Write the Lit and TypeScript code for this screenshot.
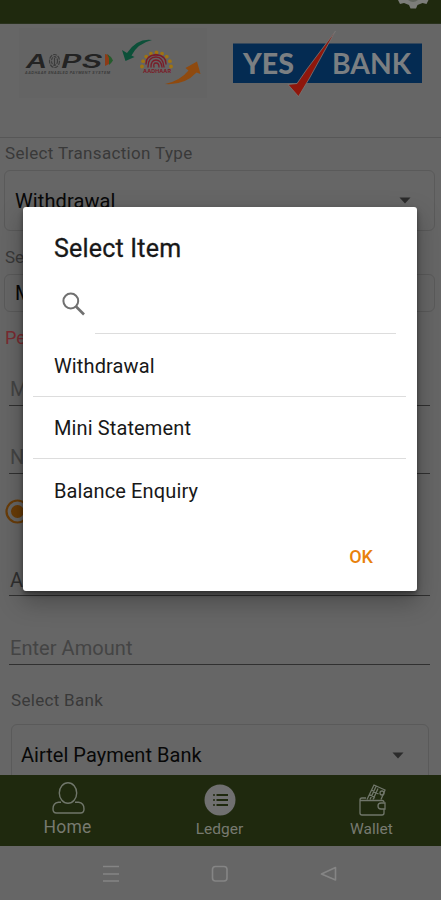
import { LitElement, html, css, svg } from "lit";
import { customElement } from "lit/decorators.js";

const arrow = html`<svg class="caret" width="12" height="7" viewBox="0 0 12 7"><path d="M0.5 0.5H11.5L6 6.5Z" fill="#2b2b2b"/></svg>`;

const rays = Array.from({ length: 9 }, (_, i) => {
  const a = Math.PI * (i / 8);
  return svg`<circle cx=${156.5 - Math.cos(a) * 14.5} cy=${66.5 - Math.sin(a) * 14} r="1.9"/>`;
});

@customElement("app-root")
export class AppRoot extends LitElement {
  static styles = css`
    :host { display: block; position: relative; width: 441px; height: 900px; overflow: hidden;
      background: #666; color: #080808; font-family: Roboto, sans-serif; }
    * { box-sizing: border-box; }
    svg { display: block; flex: none; }
    .screen { display: flex; flex-direction: column; height: 900px; }
    .top { height: 24px; flex: none; background: #1f290e; border-bottom: 1px solid #29321c; display: flex; justify-content: flex-end; padding-right: 12px; }
    .logos { height: 114px; flex: none; border-bottom: 1px solid #575757; }
    .form { flex: 1; min-height: 0; overflow: hidden; display: flex; flex-direction: column; }
    .label { flex: none; color: #393939; font-size: 17px; line-height: 20px; white-space: nowrap; }
    .select { flex: none; border: 1px solid #5a5a5a; border-radius: 6px; display: flex; align-items: center; justify-content: space-between;
      font-size: 20px; margin: 0 6px 0 4px; padding: 0 17px 0 10px; white-space: nowrap; }
    .t1 { padding: 5px 0 0 5px; height: 32px; letter-spacing: .33px; }
    .s1 { height: 61px; padding-right: 23px; letter-spacing: .1px; }
    .t2 { padding: 16px 0 0 5px; height: 43px; }
    .s2 { height: 38px; }
    .err { flex: none; padding: 16px 0 0 5px; font-size: 18px; line-height: 20px; color: #7b2b31; height: 41px; }
    .field { flex: none; margin: 0 11px 0 9px; border-bottom: 1px solid #303030; display: flex; align-items: flex-end;
      padding: 0 0 4px 1px; font-size: 20px; line-height: 24px; color: #444; letter-spacing: .05px; }
    .f1 { height: 53px; } .f2 { height: 68px; } .f3 { height: 60px; color: #303030; padding-bottom: 3px; } .f4 { height: 69px; }
    .radio { flex: none; height: 62px; padding: 25px 0 0 5px; }
    .t3 { padding: 25px 0 0 11px; height: 59px; letter-spacing: .3px; }
    .s3 { height: 70px; margin: 0 12px 0 11px; padding: 0 24px 8px 9px; letter-spacing: .03px; }
    .nav { flex: none; height: 71px; background: #1f290e; display: flex; justify-content: space-between; padding: 0 19px 0 17px; color: #777a70; }
    .item { width: 101px; display: flex; flex-direction: column; align-items: center; padding-top: 7px; font-size: 15.5px; line-height: 20px; }
    .item svg { margin-bottom: 1px; }
    .item span { padding-top: 1px; }
    .home span { font-size: 17.5px; letter-spacing: .25px; padding: 0; }
    .sys { flex: none; height: 54px; background: #666; }
    .dialog { position: absolute; left: 23px; top: 207px; width: 394px; height: 384px; background: #fff; border-radius: 3px;
      box-shadow: 0 10px 24px 1px rgba(0,0,0,.28), 0 3px 5px rgba(0,0,0,.4); display: flex; flex-direction: column; color: #181818; }
    .title { padding: 27px 0 0 31px; font-size: 25px; line-height: 30px; height: 83px; letter-spacing: .2px; -webkit-text-stroke: .3px #181818; }
    .search { display: flex; height: 44px; padding-right: 21px; }
    .glass { width: 72px; padding: 2px 0 0 38px; }
    .query { flex: 1; border-bottom: 1px solid #ddd; }
    .opt { margin: 0 11px 0 10px; padding-left: 21px; height: 62px; border-bottom: 1px solid #ddd; font-size: 20px; line-height: 24px; display: flex; align-items: center; letter-spacing: .12px; }
    .o1 { height: 63px; padding-top: 2px; }
    .last { border: 0; padding-top: 1px; }
    .ok { align-self: flex-end; margin: 24px 44px 0 0; font-size: 18px; font-weight: 500; line-height: 24px; color: #e8810c; }
  `;

  render() {
    return html`
      <div class="screen">
        <div class="top"><svg width="32" height="10" viewBox="0 0 32 10"><path d="M1 0l2 4 4-1 5 2 1.500 3.500h5.500L20.500 5l5-2 4 1 2-4z" fill="#7c7d7a"/><path d="M11 0q5 4 10 0z" fill="#62665f"/></svg></div>
        <div class="logos">
          <svg width="441" height="112" viewBox="0 24 441 112">
            <rect x="19" y="28" width="188" height="70" fill="#646464"/>
            <g fill="#232323" font-family="Inter, sans-serif" font-weight="600" font-size="18.500" font-style="italic">
              <text x="26" y="67.500" textLength="21" lengthAdjust="spacingAndGlyphs">A</text>
              <text x="61" y="67.500" textLength="41" lengthAdjust="spacingAndGlyphs">PS</text>
            </g>
            <g fill="none" stroke="#3b3b3b" stroke-width="1.200"><ellipse cx="54.500" cy="61" rx="5" ry="6.500" stroke-dasharray="4 1"/><ellipse cx="54.500" cy="61" rx="3" ry="4.300" stroke-dasharray="3 1"/><path d="M54.500 58v7"/></g>
            <path d="M105 54l4 1v9l-4 2z" fill="#8c3b17"/><path d="M107 54q4 2 6 6.500-2 3-4 4.500v-7z" fill="#255b2d"/>
            <text x="25" y="73.500" font-size="3.600" font-style="italic" font-weight="600" fill="#363636" textLength="85" font-family="Inter, sans-serif">AADHAAR ENABLED PAYMENT SYSTEM</text>
            <path d="M152 40q-15-2-25 13l-5-3 3.500 11 9-4-3-1.500q6-12 20.500-15.500z" fill="#0c5039"/>
            <g fill="#a07412">${rays}</g>
            <g fill="none" stroke="#7a1c28" stroke-width="1.300" stroke-linecap="round">
              <path d="M146 64q0-9 10-9t10 9M148 67q0-10 8-10 7 0 8 10M151 67q0-7 5-7t6 7M154 67q-1-4 2-4t3 4M148 58q8-7 16 0"/>
            </g>
            <text x="143" y="73" font-size="5" font-weight="700" fill="#7a1c28" textLength="28" lengthAdjust="spacingAndGlyphs" font-family="Inter, sans-serif">AADHAAR</text>
            <path d="M165 84q15-3 23.500-13.500l-3-2.500 11.500-6.500 3.500 12.500-4-1.500q-12 13-31.500 11.500z" fill="#8f4a0f"/>
            <rect x="233" y="43.500" width="189" height="39.500" fill="#042b52"/>
            <g font-family="Lato, sans-serif" fill="#7b7f82" font-size="28">
              <text x="243" y="73.500" font-weight="900" textLength="51" lengthAdjust="spacingAndGlyphs">YES</text>
              <text x="332" y="73.500" font-weight="700" textLength="79" lengthAdjust="spacingAndGlyphs">BANK</text>
            </g>
            <path d="M335.500 31L309 79l-10.500 17.500-10.500-12 9-1 10-14.500z" fill="#8f170c" stroke="#777" stroke-width=".8"/>
          </svg>
        </div>
        <div class="form">
          <div class="label t1">Select Transaction Type</div>
          <div class="select s1"><span>Withdrawal</span>${arrow}</div>
          <div class="label t2">Se</div>
          <div class="select s2">M</div>
          <div class="err">Pe</div>
          <div class="field f1">M</div>
          <div class="field f2">N</div>
          <div class="radio"><svg width="25" height="25" viewBox="0 0 25 25"><circle cx="12.500" cy="12.500" r="11" fill="none" stroke="#693c08" stroke-width="2.200"/><circle cx="12.500" cy="12.500" r="6.500" fill="#693c08"/></svg></div>
          <div class="field f3">A</div>
          <div class="field f4">Enter Amount</div>
          <div class="label t3">Select Bank</div>
          <div class="select s3"><span>Airtel Payment Bank</span>${arrow}</div>
        </div>
        <div class="nav">
          <div class="item home"><svg width="34" height="34" viewBox="0 0 34 34" fill="none" stroke="#70766a" stroke-width="1.400"><ellipse cx="17" cy="11" rx="8.700" ry="10.300"/><path d="M10 20.300H7.500q-5.500.700-5.500 6.700 0 4 3.500 4h24q3.500 0 3.500-4 0-6-5.500-6.700H24"/></svg><span>Home</span></div>
          <div class="item"><svg width="34" height="35" viewBox="0 0 34 35"><circle cx="17" cy="18" r="15.500" fill="#707070"/><path d="M13.500 13h11.500M13.500 18h11.500M13.500 23h11.500" stroke="#1f290e" stroke-width="1.800"/><path d="M10 13h2M10 18h2M10 23h2" stroke="#1f290e" stroke-width="1.500"/></svg><span>Ledger</span></div>
          <div class="item"><svg width="34" height="35" viewBox="0 0 34 35" fill="none" stroke="#70766a" stroke-width="1.300"><path d="M11 16H7q-2 0-2 2v13q0 2 2 2h20q2 0 2-2v-4M5 18.500h22q2 0 2 2"/><path d="M12 17.500l7-14.500 11 5-4 9.500M15 17.500l6-13M18 17.500l5-11M14 12l6 4M16.500 8l7 4"/><circle cx="27" cy="11" r="2"/><path d="M30 21h-4q-3 0-3 3t3 3h4z"/></svg><span>Wallet</span></div>
        </div>
        <div class="sys"><svg width="441" height="54" viewBox="0 846 441 54" fill="none" stroke="#858585" stroke-width="1.600"><path d="M103 866.500h16M103 874h16M103 881h16"/><rect x="212.500" y="866.500" width="14.500" height="14.500" rx="3"/><path d="M335.500 867.500v12.500L321.500 874z" stroke-linejoin="round"/></svg></div>
      </div>
      <div class="dialog">
        <div class="title">Select Item</div>
        <div class="search"><div class="glass"><svg width="25" height="25" viewBox="0 0 25 25" fill="none" stroke="#707070"><circle cx="9.800" cy="9" r="7.400" stroke-width="2"/><path d="M15 14.500l8 8" stroke-width="2.600"/></svg></div><div class="query"></div></div>
        <div class="opt o1">Withdrawal</div>
        <div class="opt">Mini Statement</div>
        <div class="opt last">Balance Enquiry</div>
        <div class="ok">OK</div>
      </div>`;
  }
}
